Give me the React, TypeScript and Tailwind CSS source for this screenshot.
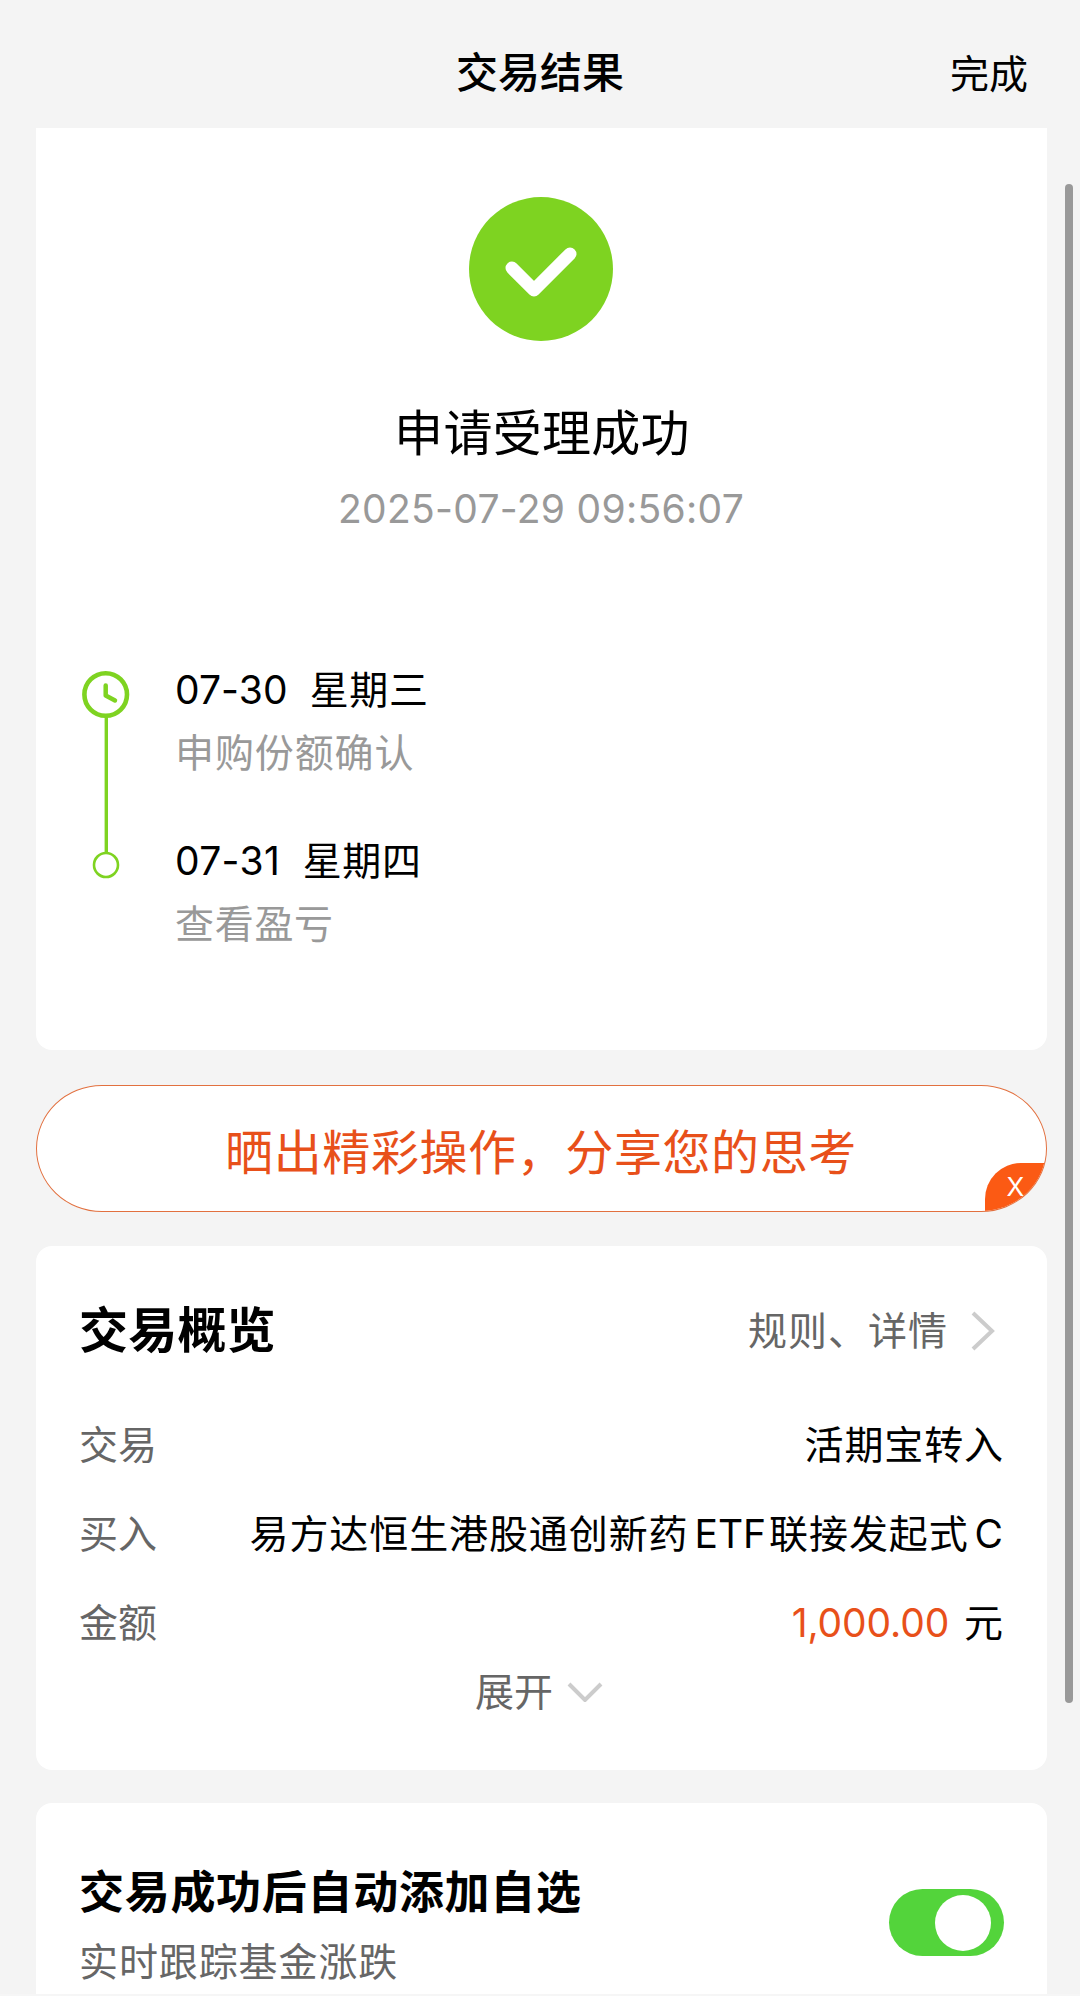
import type { ReactNode } from "react";

function Row({ label, children }: { label: string; children: ReactNode }) {
  return (
    <div className="flex h-[89px] items-center justify-between">
      <span className="text-[#666]">{label}</span>
      <span className="-mr-px tracking-[0.9px] text-black">{children}</span>
    </div>
  );
}

export default function App() {
  return (
    <div className="relative h-[2004px] w-[1080px] overflow-hidden bg-[#f4f4f4] font-['Inter','Noto_Sans_CJK_SC',sans-serif] text-[39px] leading-[56px] text-black">
      <header className="relative flex h-32 items-center justify-center pt-[18px]">
        <h1 className="text-[42px] font-medium">交易结果</h1>
        <button className="absolute right-[52px] top-[46px]">完成</button>
      </header>

      <main className="flex flex-col pl-[35.5px] pr-[33.5px]">
        <section className="flex h-[922px] flex-col rounded-b-[16px] bg-white pt-[69px]">
          <svg className="ml-[433.5px] size-36" viewBox="0 0 144 144">
            <circle cx="72" cy="72" r="72" fill="#7ed321" />
            <path d="M43 71L65 93L101 57" fill="none" stroke="#fff" strokeWidth="13" strokeLinecap="round" strokeLinejoin="round" />
          </svg>
          <h2 className="mt-[57px] pl-0.5 text-center text-[49px] leading-[72px] tracking-[0.3px]">申请受理成功</h2>
          <p className="mt-[11px] text-center tracking-[0.3px] text-[#999]">2025-07-29 09:56:07</p>
          <div className="mt-[125px] flex pl-[46.5px]">
            <svg className="mt-2 h-[212px] w-12 shrink-0" viewBox="0 0 48 212" fill="none" stroke="#7ed321">
              <circle cx="23.7" cy="24.5" r="21.3" strokeWidth="4.6" />
              <path d="M23.7 15.5V25.5L33 30.5" strokeWidth="4.5" strokeLinecap="round" strokeLinejoin="round" />
              <path d="M24.3 47V184" strokeWidth="3.4" />
              <circle cx="24" cy="195" r="12" strokeWidth="2.6" />
            </svg>
            <div className="ml-[45px]">
              <p className="whitespace-pre tracking-[0.1px]">07-30  <span className="tracking-[0.6px]">星期三</span></p>
              <p className="mt-[7px] tracking-[0.9px] text-[#999]">申购份额确认</p>
              <p className="mt-[52px] whitespace-pre tracking-[0.35px]">07-31  <span className="tracking-[0.6px]">星期四</span></p>
              <p className="mt-[7px] tracking-[0.7px] text-[#999]">查看盈亏</p>
            </div>
          </div>
        </section>

        <section className="relative mt-[35px] flex h-[127px] items-center justify-center overflow-hidden rounded-[66px/63.5px] border-[1.5px] border-[#e2703f] bg-white pt-[8px] text-[48px] tracking-[0.6px] text-[#e8501a]">
          晒出精彩操作，分享您的思考
          <button className="absolute bottom-0 right-0 flex h-[48px] w-[60.5px] items-center justify-center rounded-tl-[36px] bg-[#fb5a14] text-[26px] tracking-normal text-white">X</button>
        </section>

        <section className="mt-[34px] h-[524px] rounded-[16px] bg-white px-[43.5px] pt-[49px]">
          <div className="flex h-[72px] items-center justify-between">
            <h2 className="text-[49px] font-bold tracking-[0.2px]">交易概览</h2>
            <button className="flex items-center tracking-[1px] text-[#666]">
              规则、详情
              <svg className="ml-[23px] mr-2 h-10 w-6" viewBox="0 0 24 40" fill="none" stroke="#ccc" strokeWidth="4">
                <path d="M2 2L21 20L2 38" />
              </svg>
            </button>
          </div>
          <div className="mt-[33px]">
            <Row label="交易">活期宝转入</Row>
            <Row label="买入">
              易方达恒生港股通创新药<span className="ml-[6px] mr-[3px] tracking-normal">ETF</span>联接发起式<span className="ml-[6px]">C</span>
            </Row>
            <Row label="金额">
              <span className="mr-[3px] tracking-[-0.1px] text-[#e8501a]">1,000.00</span> 元
            </Row>
          </div>
          <button className="mx-auto -mt-[3px] flex items-center pr-1 text-[#666]">
            展开
            <svg className="ml-[14px] h-5 w-9" viewBox="0 0 36 20" fill="none" stroke="#ccc" strokeWidth="4">
              <path d="M2 2L18 18L34 2" />
            </svg>
          </button>
        </section>

        <section className="mt-[33px] flex h-[191px] justify-between rounded-t-[16px] bg-white pl-[43.5px] pr-[43px] pt-[60px]">
          <div>
            <h2 className="text-[45px] font-bold leading-[60px] tracking-[0.7px]">交易成功后自动添加自选</h2>
            <p className="mt-[11px] tracking-[0.9px] text-[#666]">实时跟踪基金涨跌</p>
          </div>
          <span className="mt-[26px] flex h-[67px] w-[115px] items-center justify-end rounded-full bg-[#53d43b] pr-[13px]">
            <span className="size-14 rounded-full bg-white" />
          </span>
        </section>
      </main>
      <div className="absolute right-[7px] top-[184px] h-[1519px] w-2 rounded-full bg-[#999]" />
      <div className="h-3 border-t-2 border-[#f6f6f6] bg-white" />
    </div>
  );
}
